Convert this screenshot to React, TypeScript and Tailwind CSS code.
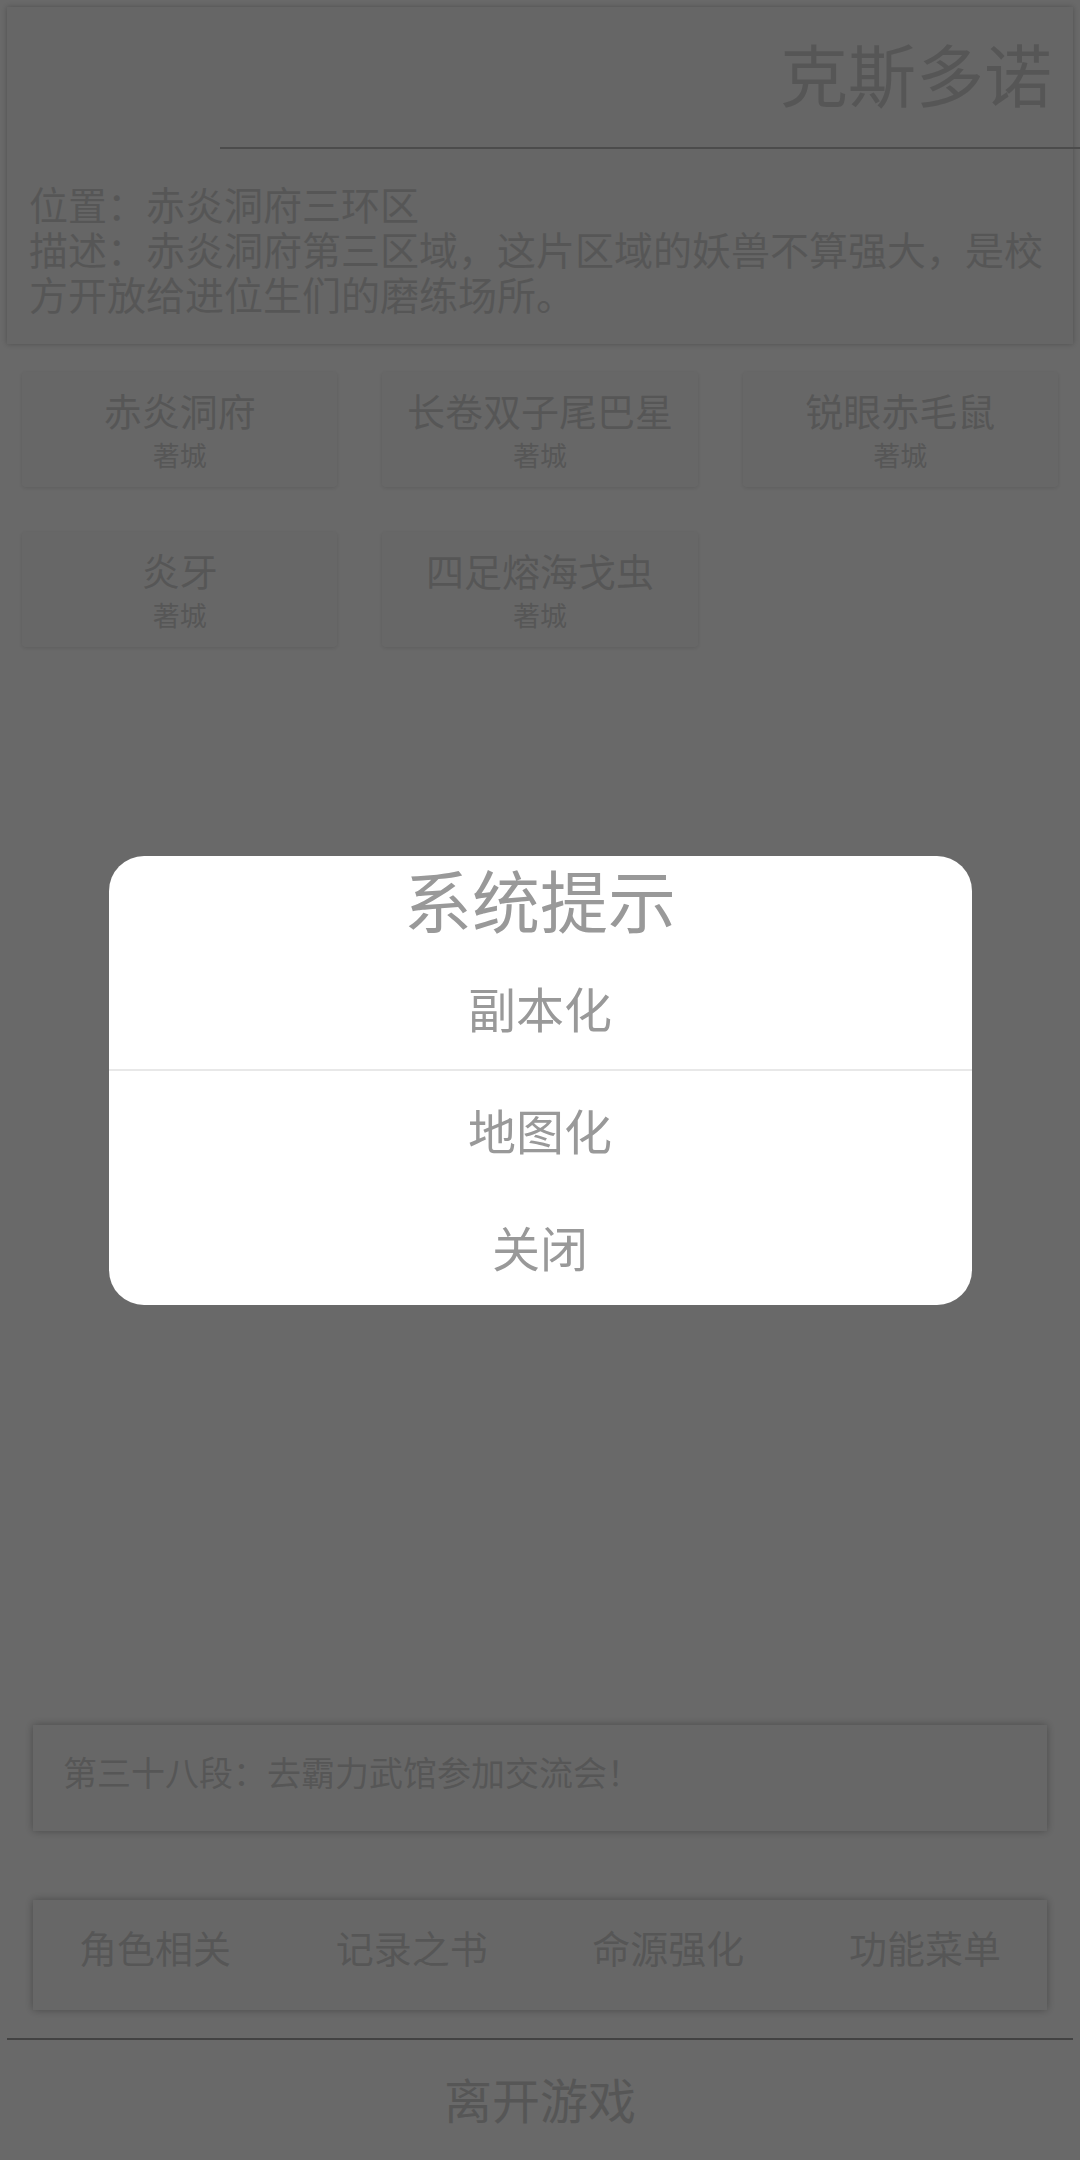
import { useState } from "react";

type Place = {
  name: string;
  city: string;
};

const places: Place[] = [
  { name: "赤炎洞府", city: "著城" },
  { name: "长卷双子尾巴星", city: "著城" },
  { name: "锐眼赤毛鼠", city: "著城" },
  { name: "炎牙", city: "著城" },
  { name: "四足熔海戈虫", city: "著城" },
];

const menuItems = ["角色相关", "记录之书", "命源强化", "功能菜单"];

const dialogOptions = ["地图化", "关闭"];

export default function App() {
  const [open, setOpen] = useState(true);

  return (
    <div className="relative flex h-[2160px] flex-col overflow-hidden bg-white font-['Noto_Sans_CJK_SC','Noto_Sans',sans-serif] text-[#d2d2d2]">
      <section className="mx-[7px] mt-[7px] h-[337px] bg-[#f8f8f8] pt-[25px] shadow-[0_0_6px_rgba(0,0,0,0.25)]">
        <h1 className="pr-[21px] text-right text-[68px] leading-[82px]">克斯多诺</h1>
        <div className="mr-[-7px] ml-[213px] mt-[33px] h-[2px] bg-[#b8b8b8]" />
        <div className="mt-[32px] pl-[22px] pr-[20px] text-[39px] leading-[45px]">
          <p>位置：赤炎洞府三环区</p>
          <p>描述：赤炎洞府第三区域，这片区域的妖兽不算强大，是校方开放给进位生们的磨练场所。</p>
        </div>
      </section>

      <div className="mt-[28px] grid grid-cols-3 gap-x-[45px] gap-y-[45px] px-[22px]">
        {places.map((place) => (
          <div
            key={place.name}
            className="flex h-[115px] flex-col items-center rounded-[4px] bg-[#fbfbfb] pt-[15px] shadow-[0_1px_4px_rgba(0,0,0,0.12)]"
          >
            <span className="text-[38px] leading-[46px]">{place.name}</span>
            <span className="mt-[6px] text-[27px] leading-[32px]">{place.city}</span>
          </div>
        ))}
      </div>

      <div className="mt-auto">
        <div className="mx-[33px] h-[106px] bg-[#fbfbfb] pl-[30px] pt-[27px] text-[34px] leading-[40px] shadow-[0_0_8px_rgba(0,0,0,0.3)]">
          第三十八段：去霸力武馆参加交流会！
        </div>

        <nav className="mx-[33px] mt-[69px] flex h-[110px] items-center justify-between bg-[#fbfbfb] px-[46px] pb-[16px] text-[38px] leading-[46px] shadow-[0_0_8px_rgba(0,0,0,0.3)]">
          {menuItems.map((item) => (
            <button key={item}>{item}</button>
          ))}
        </nav>

        <div className="mx-[7px] mt-[28px] h-[2px] bg-[#a4a4a4]" />
        <button className="flex h-[120px] w-full items-center justify-center pb-[4px] text-[48px]">
          离开游戏
        </button>
      </div>

      {open && (
        <div className="fixed inset-0 flex items-center justify-center bg-black/[0.59]">
          <div className="flex w-[863px] flex-col overflow-hidden rounded-[35px] bg-white text-[#999999]">
            <h2 className="flex h-[95px] items-center justify-center pb-[8px] text-[68px] leading-[82px]">
              系统提示
            </h2>
            <button className="flex h-[118px] items-center justify-center pb-[6px] text-[48px] leading-[60px]">
              副本化
            </button>
            <div className="h-[2px] bg-[#e8e8e8]" />
            {dialogOptions.map((option) => (
              <button
                key={option}
                onClick={() => option === "关闭" && setOpen(false)}
                className="flex h-[117px] items-center justify-center text-[48px] leading-[60px]"
              >
                {option}
              </button>
            ))}
          </div>
        </div>
      )}
    </div>
  );
}
